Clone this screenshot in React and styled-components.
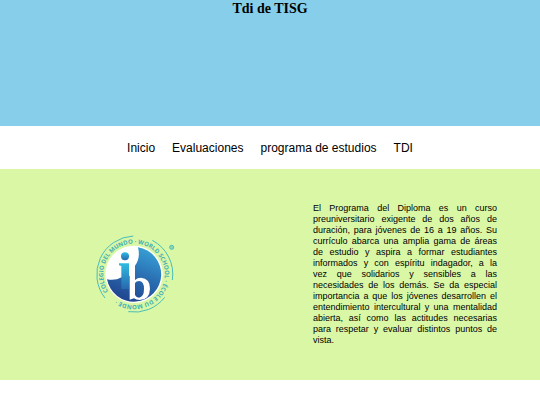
import React from 'react';
import styled, { createGlobalStyle } from 'styled-components';

const GlobalStyle = createGlobalStyle`
  * {
    box-sizing: border-box;
  }

  body {
    margin: 0;
    background: #fff;
    font-family: 'Liberation Sans', Arial, sans-serif;
    color: #000;
  }
`;

const Header = styled.header`
  height: 126px;
  background: skyblue;
  text-align: center;
`;

const Title = styled.h1`
  margin: 0;
  font-family: 'Liberation Serif', 'Times New Roman', serif;
  font-size: 14px;
  line-height: 17px;
`;

const Nav = styled.nav`
  display: flex;
  justify-content: center;
  gap: 17px;
  padding: 14px 0 13px;
`;

const NavLink = styled.a`
  color: #000;
  font-size: 12px;
  line-height: 16px;
  text-decoration: none;
`;

const Program = styled.main`
  display: grid;
  grid-template-columns: 1fr 1fr;
  align-items: center;
  padding: 34px 0;
  background: #daf7a6;
`;

const Logo = styled.svg`
  display: block;
  justify-self: center;
  width: 80px;
  height: 80px;
`;

const Description = styled.p`
  margin: 0 43px;
  font-size: 9px;
  line-height: 11px;
  text-align: justify;
`;

const Line = styled.span`
  display: block;
  text-align-last: justify;

  &:last-child {
    text-align-last: left;
  }
`;

const links = [
  { label: 'Inicio', href: '#inicio' },
  { label: 'Evaluaciones', href: '#evaluaciones' },
  { label: 'programa de estudios', href: '#programa' },
  { label: 'TDI', href: '#tdi' },
];

const description = [
  'El Programa del Diploma es un curso',
  'preuniversitario exigente de dos años de',
  'duración, para jóvenes de 16 a 19 años. Su',
  'currículo abarca una amplia gama de áreas',
  'de estudio y aspira a formar estudiantes',
  'informados y con espíritu indagador, a la',
  'vez que solidarios y sensibles a las',
  'necesidades de los demás. Se da especial',
  'importancia a que los jóvenes desarrollen el',
  'entendimiento intercultural y una mentalidad',
  'abierta, así como las actitudes necesarias',
  'para respetar y evaluar distintos puntos de',
  'vista.',
];

function SchoolLogo() {
  return (
    <Logo viewBox="30 28 240 240" role="img" aria-label="Colegio del Mundo IB">
      <defs>
        <linearGradient id="disc" x1="0.8" y1="0" x2="0.4" y2="1">
          <stop offset="0" stopColor="#38a4d8" />
          <stop offset="0.5" stopColor="#2a6fb2" />
          <stop offset="1" stopColor="#20458f" />
        </linearGradient>
        <linearGradient id="stem" x1="0" y1="0" x2="0" y2="1">
          <stop offset="0" stopColor="#2fbbe0" />
          <stop offset="1" stopColor="#2868ae" />
        </linearGradient>
        <path id="ring" d="M70 197 A92 92 0 0 1 224 95 A92 92 0 0 1 70 197" />
      </defs>
      <circle cx="147" cy="146" r="86" fill="#fff" />
      <path
        fill="url(#disc)"
        d="M159 65 A82 82 0 1 1 66 161 Q90 166 110 155 L132 150 L150 150 L150 120 Q167 98 159 65 Z"
      />
      <g fill="url(#stem)">
        <circle cx="120" cy="92" r="12" />
        <path d="M102 113 H132 V190 H109 V121 L102 119 Z" />
      </g>
      <path
        fill="#fff"
        fillRule="evenodd"
        d="M134 110 H150 V163 Q157 156 168 156 Q195 158 195 189 Q194 222 164 223 Q153 223 147 218 L134 222 Z M150 172 V208 Q154 216 162 216 Q177 214 177 190 Q177 166 162 166 Q154 166 150 172 Z"
      />
      <g fill="none" stroke="#48bdb9" strokeWidth="3">
        <path d="M60 217 A115 115 0 0 1 145 31" />
        <path d="M202 44 A115 115 0 0 1 262 163" />
        <path d="M239 215 A115 115 0 0 1 130 258" />
      </g>
      <text fill="#42afb5" fontSize="18" fontWeight="bold" fontFamily="'Open Sans', sans-serif">
        <textPath href="#ring">
          COLEGIO DEL MUNDO · WORLD SCHOOL · ÉCOLE DU MONDE ·
        </textPath>
      </text>
      <circle cx="260" cy="65" r="6" fill="#8fd9b2" stroke="#48bdb9" strokeWidth="3" />
    </Logo>
  );
}

export default function App() {
  return (
    <>
      <GlobalStyle />
      <Header>
        <Title>Tdi de TISG</Title>
      </Header>
      <Nav>
        {links.map((link) => (
          <NavLink key={link.href} href={link.href}>{link.label}</NavLink>
        ))}
      </Nav>
      <Program>
        <SchoolLogo />
        <Description>
          {description.map((line) => (
            <Line key={line}>{line} </Line>
          ))}
        </Description>
      </Program>
    </>
  );
}
